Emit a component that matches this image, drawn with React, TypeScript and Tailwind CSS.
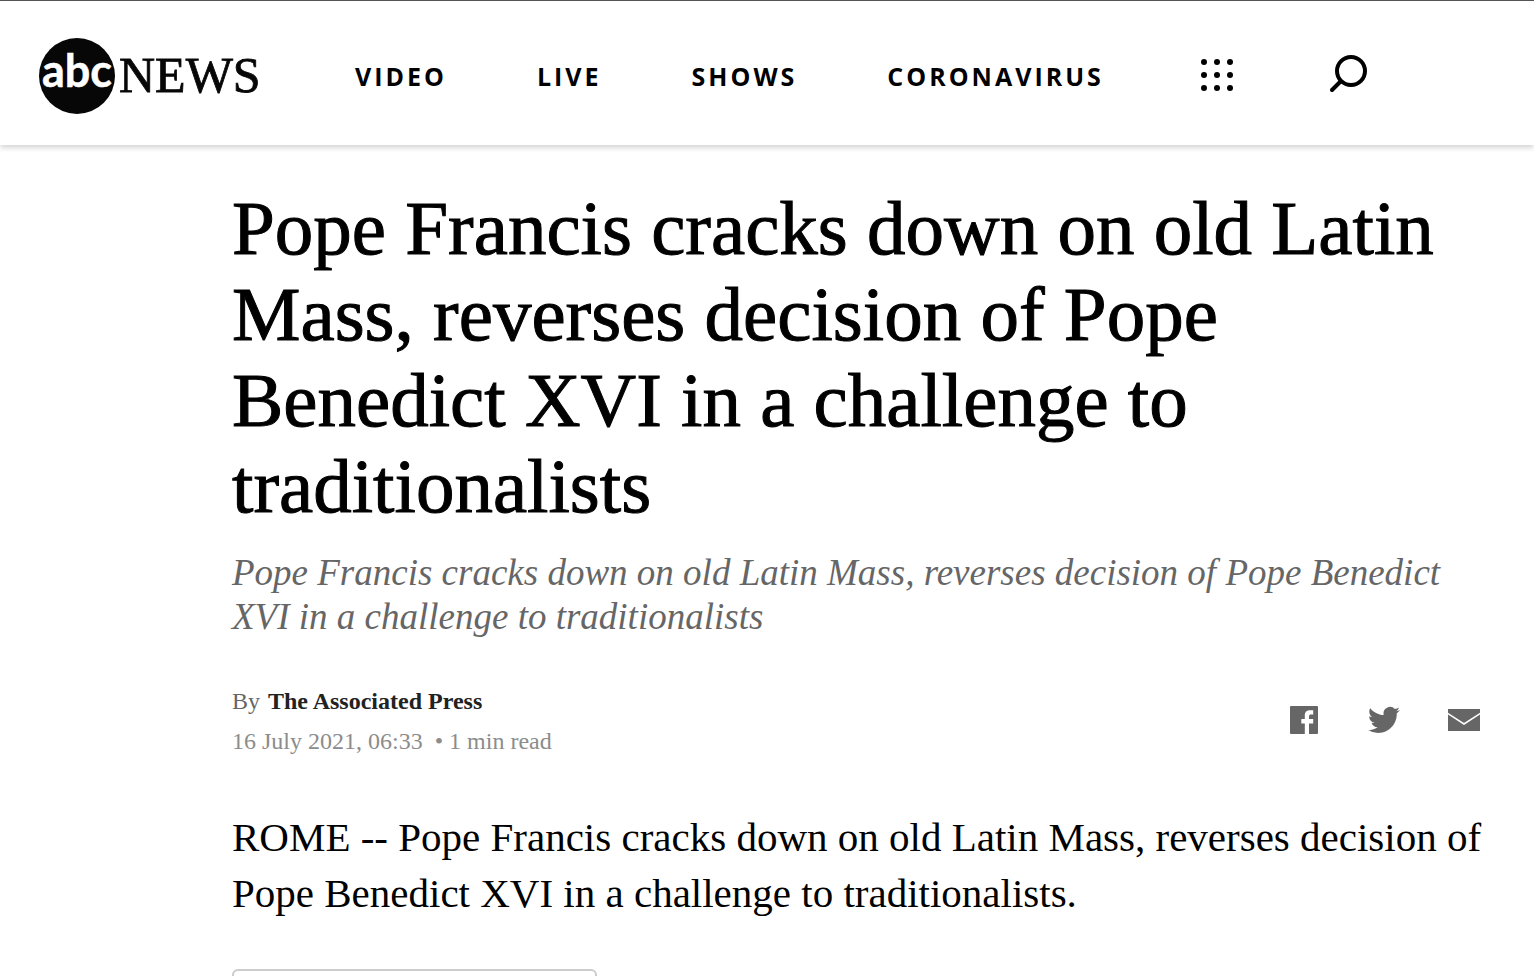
import React from 'react';

const HEADLINE = 'Pope Francis cracks down on old Latin Mass, reverses decision of Pope Benedict XVI in a challenge to traditionalists';

const navItems = ['Video', 'Live', 'Shows', 'Coronavirus'];

const Logo: React.FC = () => (
  <svg viewBox="0 0 224 78" className="h-[78px] w-[224px]" role="img" aria-label="abc NEWS">
    <circle cx="39" cy="39" r="38" fill="#070707" />
    <text x="39" y="50" textAnchor="middle" fill="#fff" stroke="#fff" strokeWidth="0.5" fontSize="45" fontWeight="700" fontFamily="Lato, sans-serif">
      abc
    </text>
    <text x="81" y="55" fill="#070707" stroke="#070707" strokeWidth="0.8" fontSize="50" fontFamily="'Liberation Serif', serif">
      NEWS
    </text>
  </svg>
);

const GridIcon: React.FC = () => (
  <svg viewBox="0 0 34 34" className="size-[34px]" fill="#000">
    {[4, 17, 30].map(cy => [4, 17, 30].map(cx => <circle key={`${cx}-${cy}`} cx={cx} cy={cy} r="3" />))}
  </svg>
);

const SearchIcon: React.FC = () => (
  <svg viewBox="0 0 40 40" className="size-10" fill="none" stroke="#000" strokeWidth="4" strokeLinecap="round">
    <circle cx="23" cy="18" r="14" />
    <path d="M12.5 28.5 4 37" />
  </svg>
);

const FacebookIcon: React.FC = () => (
  <svg viewBox="0 0 28 28" className="size-7" fill="#666">
    <path d="M1 0h26a1 1 0 0 1 1 1v26a1 1 0 0 1-1 1h-8V17.500h4.200V13H19v-2.300c0-1.600.7-2.200 2-2.200h2.200V4.300h-3.400c-3.400 0-5 2.200-5 5.200V13h-3.500v4.500h3.500V28H1a1 1 0 0 1-1-1V1a1 1 0 0 1 1-1z" />
  </svg>
);

const TwitterIcon: React.FC = () => (
  <svg viewBox="0 0 24 24" className="size-8" fill="#666">
    <path d="M23.954 4.569a10 10 0 0 1-2.825.775 4.958 4.958 0 0 0 2.163-2.723 9.990 9.990 0 0 1-3.127 1.184 4.920 4.920 0 0 0-8.384 4.482C7.691 8.094 4.066 6.130 1.640 3.161a4.822 4.822 0 0 0-.666 2.475c0 1.710.87 3.213 2.188 4.096a4.904 4.904 0 0 1-2.228-.616v.061a4.923 4.923 0 0 0 3.946 4.827 4.996 4.996 0 0 1-2.212.085 4.937 4.937 0 0 0 4.604 3.417 9.868 9.868 0 0 1-6.102 2.105c-.39 0-.779-.023-1.170-.067a13.995 13.995 0 0 0 7.557 2.209c9.054 0 13.999-7.496 13.999-13.986 0-.209 0-.42-.015-.63a9.936 9.936 0 0 0 2.460-2.548z" />
  </svg>
);

const MailIcon: React.FC = () => (
  <svg viewBox="0 0 32 22" className="h-[22px] w-8">
    <path d="M0 0h32v22H0z" fill="#666" />
    <path d="M-1 4 16 15 33 4" fill="none" stroke="#fff" strokeWidth="1.6" />
  </svg>
);

const Header: React.FC = () => (
  <header className="relative flex h-[145px] items-center border-t border-[#555] bg-white pl-[38px] shadow-[0_3px_5px_rgba(0,0,0,0.16)]">
    <a href="#home" className="shrink-0 pt-1.5">
      <Logo />
    </a>
    <nav className="ml-[93px] flex items-center gap-[90px] pt-1.5">
      {navItems.map(item => (
        <a
          key={item}
          href={`#${item.toLowerCase()}`}
          className="font-['Open_Sans',sans-serif] text-[25px] leading-8 font-bold tracking-[3px] text-black uppercase"
        >
          {item}
        </a>
      ))}
    </nav>
    <button type="button" aria-label="More sections" className="ml-24 pt-1">
      <GridIcon />
    </button>
    <button type="button" aria-label="Search" className="ml-[94px]">
      <SearchIcon />
    </button>
  </header>
);

const ShareLinks: React.FC = () => (
  <div className="flex items-center gap-12 pb-0.5">
    <a href="#facebook" aria-label="Facebook" className="flex w-8 justify-center">
      <FacebookIcon />
    </a>
    <a href="#twitter" aria-label="Twitter">
      <TwitterIcon />
    </a>
    <a href="#email" aria-label="Email">
      <MailIcon />
    </a>
  </div>
);

const App: React.FC = () => {
  return (
    <div className="h-screen overflow-hidden bg-white font-['Liberation_Serif',serif]">
      <Header />
      <main className="pt-10 pr-12 pl-[232px]">
        <h1 className="text-[77px] leading-[86px] text-black [-webkit-text-stroke:1px_#000]">{HEADLINE}</h1>
        <p className="mt-[22px] text-[37px] leading-[44px] text-[#666] italic">{HEADLINE}</p>

        <div className="mt-[42px] flex items-center justify-between pr-1.5">
          <div className="text-[24px] leading-10">
            <p className="text-[#666]">
              By <b className="ml-0.5 text-[#222]">The Associated Press</b>
            </p>
            <p className="text-[#8c8c8c]">
              16 July 2021, 06:33 <span className="ml-1.5">• 1 min read</span>
            </p>
          </div>
          <ShareLinks />
        </div>

        <p className="mt-12 text-[41px] leading-[56px] text-black">{`ROME -- ${HEADLINE}.`}</p>

        <button type="button" aria-label="Read more" className="mt-12 block h-16 w-[365px] rounded-md border-2 border-[#ccc]" />
      </main>
    </div>
  );
};

export default App;
